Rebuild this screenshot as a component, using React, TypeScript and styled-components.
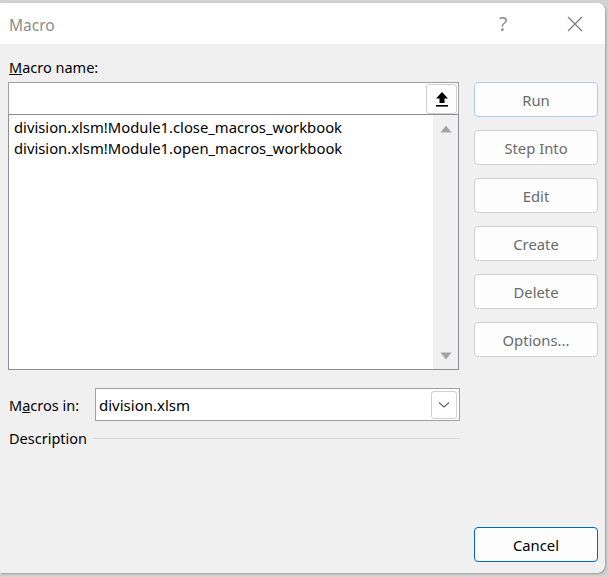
import React from "react";
import styled, { createGlobalStyle } from "styled-components";

const Global = createGlobalStyle`
  html, body { margin: 0; padding: 0; }
  body {
    background: #d2d2d2;
    font-family: "Noto Sans", "Open Sans", sans-serif;
    width: 609px;
    height: 577px;
    overflow: hidden;
  }
`;

const Dialog = styled.div`
  margin-top: 3px;
  width: 605px;
  height: 570px;
  background: #f0f0f0;
  border-radius: 0 8px 8px 0;
  overflow: hidden;
  display: flex;
  flex-direction: column;
  box-shadow: 1px 1px 2px rgba(0, 0, 0, 0.25);
`;

const TitleBar = styled.div`
  height: 41px;
  background: #ffffff;
  display: flex;
  align-items: center;
  padding: 0 0 0 9px;
  flex-shrink: 0;
`;

const Title = styled.div`
  flex: 1;
  font-size: 15.5px;
  color: #8c8c8c;
  padding-top: 2px;
`;

const TitleIcon = styled.div<{ $w: number }>`
  width: ${(p) => p.$w}px;
  display: flex;
  align-items: center;
  justify-content: center;
  color: #8c8c8c;
  font-size: 19px;
`;

const Body = styled.div`
  flex: 1;
  display: grid;
  grid-template-columns: 451px 124px;
  column-gap: 15px;
  padding: 14px 0 11px 8px;
`;

const LeftCol = styled.div`
  display: flex;
  flex-direction: column;
`;

const Label = styled.div`
  font-size: 14.5px;
  color: #000;
  height: 24px;
  padding-left: 1px;
  line-height: 19px;
`;

const NameInput = styled.div`
  height: 30px;
  border: 1px solid #a0a0a0;
  border-bottom: none;
  background: #fff;
  display: flex;
  justify-content: flex-end;
  padding: 1px 1px 0 0;
`;

const IconButton = styled.div`
  width: 29px;
  height: 28px;
  border: 1px solid #cfcfcf;
  border-radius: 3px;
  background: #fdfdfd;
  display: flex;
  align-items: center;
  justify-content: center;
`;

const List = styled.div`
  height: 254px;
  border: 1px solid #8e8e96;
  background: #fff;
  display: flex;
`;

const ListItems = styled.div`
  flex: 1;
  padding: 2px 0 0 5px;
`;

const ListItem = styled.div`
  font-size: 14.8px;
  line-height: 21px;
  color: #000;
  white-space: nowrap;
`;

const ScrollBar = styled.div`
  width: 25px;
  background: #f0f0f0;
  display: flex;
  flex-direction: column;
  justify-content: space-between;
  align-items: center;
  padding: 10px 0 9px;
`;

const MacrosRow = styled.div`
  margin-top: 18px;
  display: flex;
  align-items: center;
`;

const RowLabel = styled.div`
  width: 86px;
  font-size: 14.5px;
  padding-left: 1px;
  color: #000;
`;

const Select = styled.div`
  flex: 1;
  height: 31px;
  border: 1px solid #a0a0a0;
  background: #fff;
  display: flex;
  align-items: center;
  padding: 0 2px 0 3px;
  margin-right: -1px;
`;

const SelectValue = styled.div`
  flex: 1;
  font-size: 15px;
  color: #000;
`;

const DropButton = styled.div`
  width: 24px;
  height: 26px;
  border: 1px solid #d0d0d0;
  border-radius: 3px;
  display: flex;
  align-items: center;
  justify-content: center;
`;

const DescRow = styled.div`
  margin-top: 7px;
  display: flex;
  align-items: center;
  gap: 6px;
`;

const DescLabel = styled.div`
  font-size: 14.5px;
  color: #000;
  padding-left: 1px;
`;

const Rule = styled.div`
  flex: 1;
  height: 1px;
  background: #d9d9d9;
  margin-right: -1px;
`;

const RightCol = styled.div`
  display: flex;
  flex-direction: column;
  gap: 13px;
  padding-top: 24px;
`;

const Button = styled.div<{ $variant?: "focus" | "primary" }>`
  height: 33px;
  border-radius: 4px;
  background: #fdfdfd;
  border: 1px solid
    ${(p) =>
      p.$variant === "primary" ? "#0067c0" : p.$variant === "focus" ? "#b4cde6" : "#d0d0d0"};
  display: flex;
  align-items: center;
  justify-content: center;
  font-size: 14.8px;
  color: ${(p) => (p.$variant === "primary" ? "#000" : "#6a6a6a")};
  &:last-child {
    margin-top: auto;
  }
`;

export default function App() {
  return (
    <>
      <Global />
      <Dialog>
        <TitleBar>
          <Title>Macro</Title>
          <TitleIcon $w={28}>?</TitleIcon>
          <TitleIcon $w={28} style={{ marginLeft: 44, marginRight: 16 }}>
            <svg width="16" height="16" viewBox="0 0 16 16">
              <path d="M1 1 L15 15 M15 1 L1 15" stroke="#7a7a7a" strokeWidth="1.2" />
            </svg>
          </TitleIcon>
        </TitleBar>
        <Body>
          <LeftCol>
            <Label>
              <u>M</u>acro name:
            </Label>
            <NameInput>
              <IconButton>
                <svg width="14" height="16" viewBox="0 0 14 16">
                  <path d="M7 1 L13 7.5 L9.5 7.5 L9.5 12 L4.5 12 L4.5 7.5 L1 7.5 Z" fill="#000" />
                  <rect x="1" y="14" width="12" height="1.6" fill="#000" />
                </svg>
              </IconButton>
            </NameInput>
            <List>
              <ListItems>
                <ListItem>division.xlsm!Module1.close_macros_workbook</ListItem>
                <ListItem>division.xlsm!Module1.open_macros_workbook</ListItem>
              </ListItems>
              <ScrollBar>
                <svg width="12" height="8" viewBox="0 0 12 8">
                  <path d="M6 0.5 L11.5 7.5 L0.5 7.5 Z" fill="#a3a3a3" />
                </svg>
                <svg width="12" height="8" viewBox="0 0 12 8">
                  <path d="M0.5 0.5 L11.5 0.5 L6 7.5 Z" fill="#a3a3a3" />
                </svg>
              </ScrollBar>
            </List>
            <MacrosRow>
              <RowLabel>
                M<u>a</u>cros in:
              </RowLabel>
              <Select>
                <SelectValue>division.xlsm</SelectValue>
                <DropButton>
                  <svg width="12" height="8" viewBox="0 0 12 8">
                    <path d="M1 1.5 L6 6 L11 1.5" stroke="#606060" strokeWidth="1.1" fill="none" />
                  </svg>
                </DropButton>
              </Select>
            </MacrosRow>
            <DescRow>
              <DescLabel>Description</DescLabel>
              <Rule />
            </DescRow>
          </LeftCol>
          <RightCol>
            <Button $variant="focus">Run</Button>
            <Button>Step Into</Button>
            <Button>Edit</Button>
            <Button>Create</Button>
            <Button>Delete</Button>
            <Button>Options...</Button>
            <Button $variant="primary">Cancel</Button>
          </RightCol>
        </Body>
      </Dialog>
    </>
  );
}
